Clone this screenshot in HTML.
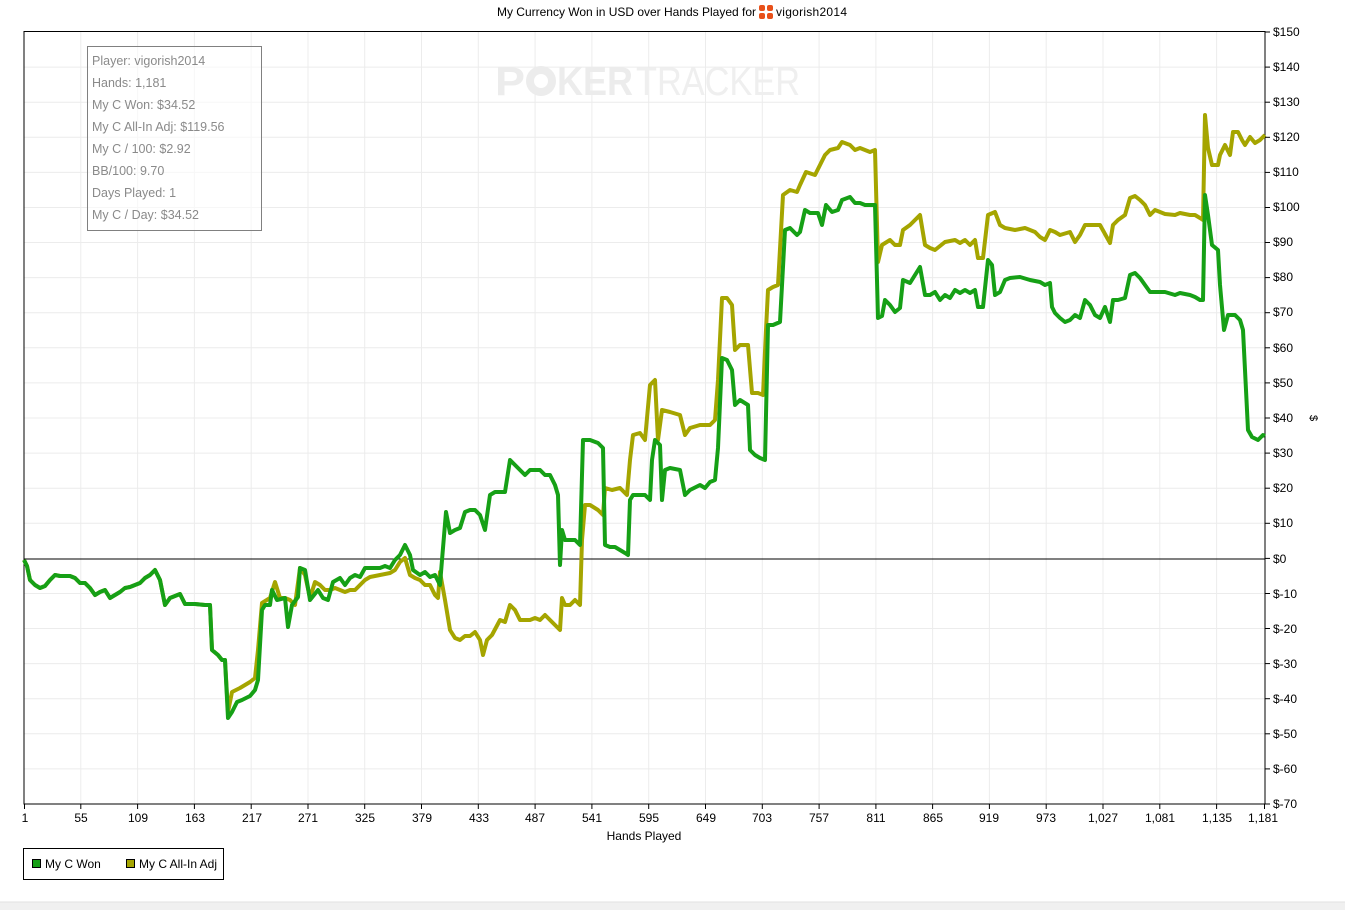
<!DOCTYPE html>
<html><head><meta charset="utf-8"><style>
html,body{margin:0;padding:0;background:#fff;width:1345px;height:910px;overflow:hidden;font-family:"Liberation Sans",sans-serif}
svg text{font-family:"Liberation Sans",sans-serif}
</style></head><body>
<svg width="1345" height="910" viewBox="0 0 1345 910" xmlns="http://www.w3.org/2000/svg">
<rect x="0" y="0" width="1345" height="910" fill="#fff"/>
<text x="497" y="16" font-size="12" fill="#000" textLength="259">My Currency Won in USD over Hands Played for</text>
<g fill="#e8501a"><rect x="759" y="5" width="6" height="6" rx="2"/><rect x="767" y="5" width="6" height="6" rx="2"/><rect x="759" y="13" width="6" height="6" rx="2"/><rect x="767" y="13" width="6" height="6" rx="2"/></g>
<text x="776" y="16" font-size="12" fill="#000" textLength="71">vigorish2014</text>
<g stroke="#ececec" stroke-width="1">
<line x1="24" x2="1265" y1="67.1" y2="67.1"/><line x1="24" x2="1265" y1="102.2" y2="102.2"/><line x1="24" x2="1265" y1="137.3" y2="137.3"/><line x1="24" x2="1265" y1="172.4" y2="172.4"/><line x1="24" x2="1265" y1="207.5" y2="207.5"/><line x1="24" x2="1265" y1="242.5" y2="242.5"/><line x1="24" x2="1265" y1="277.6" y2="277.6"/><line x1="24" x2="1265" y1="312.7" y2="312.7"/><line x1="24" x2="1265" y1="347.8" y2="347.8"/><line x1="24" x2="1265" y1="382.9" y2="382.9"/><line x1="24" x2="1265" y1="418" y2="418"/><line x1="24" x2="1265" y1="453.1" y2="453.1"/><line x1="24" x2="1265" y1="488.2" y2="488.2"/><line x1="24" x2="1265" y1="523.3" y2="523.3"/><line x1="24" x2="1265" y1="593.5" y2="593.5"/><line x1="24" x2="1265" y1="628.5" y2="628.5"/><line x1="24" x2="1265" y1="663.6" y2="663.6"/><line x1="24" x2="1265" y1="698.7" y2="698.7"/><line x1="24" x2="1265" y1="733.8" y2="733.8"/><line x1="24" x2="1265" y1="768.9" y2="768.9"/>
<line y1="32" y2="804" x1="80.8" x2="80.8"/><line y1="32" y2="804" x1="137.6" x2="137.6"/><line y1="32" y2="804" x1="194.4" x2="194.4"/><line y1="32" y2="804" x1="251.2" x2="251.2"/><line y1="32" y2="804" x1="308" x2="308"/><line y1="32" y2="804" x1="364.7" x2="364.7"/><line y1="32" y2="804" x1="421.5" x2="421.5"/><line y1="32" y2="804" x1="478.3" x2="478.3"/><line y1="32" y2="804" x1="535.1" x2="535.1"/><line y1="32" y2="804" x1="591.9" x2="591.9"/><line y1="32" y2="804" x1="648.7" x2="648.7"/><line y1="32" y2="804" x1="705.5" x2="705.5"/><line y1="32" y2="804" x1="762.3" x2="762.3"/><line y1="32" y2="804" x1="819.1" x2="819.1"/><line y1="32" y2="804" x1="875.9" x2="875.9"/><line y1="32" y2="804" x1="932.6" x2="932.6"/><line y1="32" y2="804" x1="989.4" x2="989.4"/><line y1="32" y2="804" x1="1046.2" x2="1046.2"/><line y1="32" y2="804" x1="1103" x2="1103"/><line y1="32" y2="804" x1="1159.8" x2="1159.8"/><line y1="32" y2="804" x1="1216.6" x2="1216.6"/>
</g>
<text x="495" y="95" font-size="40" font-weight="bold" fill="#ececec" textLength="30" lengthAdjust="spacingAndGlyphs">P</text>
<circle cx="541" cy="81" r="15" fill="#ececec"/><circle cx="541" cy="81" r="7" fill="#fff"/>
<text x="557" y="95" font-size="40" font-weight="bold" fill="#ececec" textLength="76" lengthAdjust="spacingAndGlyphs">KER</text>
<text x="636" y="95" font-size="40" fill="#efefef" textLength="164" lengthAdjust="spacingAndGlyphs">TRACKER</text>
<rect x="24" y="31.5" width="1241" height="772.5" fill="none" stroke="#000" stroke-width="1"/>
<line x1="24" x2="1265" y1="559" y2="559" stroke="#000" stroke-width="1"/>
<g fill="none" stroke-width="4" stroke-linejoin="round">
<polyline stroke="#a5a500" points="24,560 27,566 30,580 35,585 40,588 45,586 50,580 55,575 60,576 70,576 75,578 80,583 85,583 90,588 95,595 100,592 105,590 110,598 115,595 120,592 125,588 130,587 135,585 140,583 145,578 150,575 155,570 160,580 165,605 170,598 175,596 180,594 185,604 195,604 205,605 210,605 212,650 218,655 222,660 225,660 228,712 232,692 240,688 250,682 255,678 258,650 262,603 270,598 275,582 280,598 285,598 290,600 295,605 300,568 305,575 310,598 315,582 320,585 325,590 330,590 335,588 340,590 345,592 350,590 355,590 360,585 365,580 370,577 380,575 390,573 395,570 400,562 405,558 410,575 415,578 420,580 425,585 430,585 435,595 438,598 440,572 445,600 450,630 455,638 460,640 465,636 470,636 475,632 480,640 483,655 487,640 492,635 500,620 505,622 510,605 515,610 520,620 530,620 535,618 540,620 545,615 550,620 555,625 560,630 562,598 565,605 570,605 575,600 580,605 582,540 585,505 590,505 598,510 603,515 605,488 612,490 620,488 627,495 630,460 633,435 640,433 645,440 650,385 655,380 658,440 662,410 670,412 680,415 685,435 690,428 700,425 710,425 715,420 718,380 722,298 727,298 732,305 735,350 740,345 748,345 752,393 758,393 763,395 766,330 768,290 773,287 778,285 783,195 790,190 797,192 800,185 806,172 815,175 820,165 825,155 830,150 838,148 842,142 850,145 855,150 860,148 865,150 870,152 875,150 878,262 882,245 890,240 895,245 900,245 903,230 910,225 915,220 920,215 925,245 930,248 935,250 945,242 955,240 960,243 965,240 970,245 975,240 978,258 983,258 988,215 995,212 1000,225 1005,228 1015,230 1025,228 1035,232 1040,237 1045,240 1050,230 1055,232 1060,235 1070,232 1075,242 1080,235 1085,225 1090,225 1100,225 1110,243 1113,225 1118,220 1125,215 1130,198 1135,196 1140,200 1145,205 1150,215 1155,210 1165,214 1175,215 1180,213 1190,215 1195,215 1200,218 1203,220 1205,115 1208,148 1212,165 1218,165 1220,155 1225,145 1230,155 1233,132 1238,132 1242,140 1245,145 1250,137 1255,143 1260,140 1265,135"/>
<polyline stroke="#16a016" points="24,560 27,566 30,580 35,585 40,588 45,586 50,580 55,575 60,576 70,576 75,578 80,583 85,583 90,588 95,595 100,592 105,590 110,598 115,595 120,592 125,588 130,587 135,585 140,583 145,578 150,575 155,570 160,580 165,605 170,598 175,596 180,594 185,604 195,604 205,605 210,605 212,650 218,655 222,660 225,660 228,718 232,712 237,702 242,700 250,696 255,690 258,680 262,610 265,605 270,605 272,590 277,600 285,598 288,627 292,605 298,597 300,568 305,570 310,600 318,590 323,598 328,600 333,582 340,578 345,585 350,578 355,575 360,577 365,568 370,568 380,568 385,566 390,568 395,560 400,555 405,545 410,555 413,570 420,575 425,572 430,577 435,575 440,585 442,560 446,512 450,533 455,530 460,528 465,512 470,510 475,510 480,515 485,530 490,495 495,492 505,492 510,460 515,465 520,470 525,475 530,470 540,470 545,475 550,475 555,485 558,495 560,565 562,530 565,540 570,540 575,540 580,545 583,440 590,440 598,443 603,448 605,545 610,547 615,547 620,550 625,553 628,555 630,500 633,495 640,495 645,495 650,500 652,460 655,440 660,445 662,500 665,470 670,468 680,470 685,495 690,490 700,485 705,488 710,482 715,480 718,448 722,358 727,360 732,370 735,405 740,400 748,405 750,450 755,455 760,458 765,460 768,325 773,325 780,322 785,230 790,228 797,235 800,232 805,210 810,213 818,213 822,225 826,205 832,212 838,210 842,200 850,197 855,203 860,203 865,205 870,205 875,205 878,318 882,316 885,300 890,305 895,312 900,308 903,280 910,283 915,275 920,267 925,295 930,295 935,292 940,300 945,295 950,298 955,290 960,293 965,290 970,293 975,290 978,307 983,307 988,260 992,265 995,295 1000,292 1005,280 1010,278 1020,277 1030,280 1040,282 1045,285 1050,283 1052,307 1055,313 1060,318 1065,322 1070,320 1075,315 1080,318 1085,300 1090,305 1095,315 1100,318 1105,307 1110,322 1113,300 1118,300 1125,298 1130,275 1135,273 1140,278 1145,285 1150,292 1155,292 1165,292 1175,295 1180,293 1190,295 1195,297 1200,300 1203,300 1205,195 1208,215 1212,245 1218,250 1220,285 1224,330 1228,315 1235,315 1240,320 1243,330 1248,430 1252,437 1258,440 1263,435 1265,436"/>
</g>
<g stroke="#000" stroke-width="1">
<line x1="1265" x2="1270" y1="32" y2="32"/><line x1="1265" x2="1270" y1="67.1" y2="67.1"/><line x1="1265" x2="1270" y1="102.2" y2="102.2"/><line x1="1265" x2="1270" y1="137.3" y2="137.3"/><line x1="1265" x2="1270" y1="172.4" y2="172.4"/><line x1="1265" x2="1270" y1="207.5" y2="207.5"/><line x1="1265" x2="1270" y1="242.5" y2="242.5"/><line x1="1265" x2="1270" y1="277.6" y2="277.6"/><line x1="1265" x2="1270" y1="312.7" y2="312.7"/><line x1="1265" x2="1270" y1="347.8" y2="347.8"/><line x1="1265" x2="1270" y1="382.9" y2="382.9"/><line x1="1265" x2="1270" y1="418" y2="418"/><line x1="1265" x2="1270" y1="453.1" y2="453.1"/><line x1="1265" x2="1270" y1="488.2" y2="488.2"/><line x1="1265" x2="1270" y1="523.3" y2="523.3"/><line x1="1265" x2="1270" y1="558.4" y2="558.4"/><line x1="1265" x2="1270" y1="593.5" y2="593.5"/><line x1="1265" x2="1270" y1="628.5" y2="628.5"/><line x1="1265" x2="1270" y1="663.6" y2="663.6"/><line x1="1265" x2="1270" y1="698.7" y2="698.7"/><line x1="1265" x2="1270" y1="733.8" y2="733.8"/><line x1="1265" x2="1270" y1="768.9" y2="768.9"/><line x1="1265" x2="1270" y1="804" y2="804"/>
<line y1="804" y2="809" x1="24.5" x2="24.5"/><line y1="804" y2="809" x1="80.8" x2="80.8"/><line y1="804" y2="809" x1="137.6" x2="137.6"/><line y1="804" y2="809" x1="194.4" x2="194.4"/><line y1="804" y2="809" x1="251.2" x2="251.2"/><line y1="804" y2="809" x1="308" x2="308"/><line y1="804" y2="809" x1="364.7" x2="364.7"/><line y1="804" y2="809" x1="421.5" x2="421.5"/><line y1="804" y2="809" x1="478.3" x2="478.3"/><line y1="804" y2="809" x1="535.1" x2="535.1"/><line y1="804" y2="809" x1="591.9" x2="591.9"/><line y1="804" y2="809" x1="648.7" x2="648.7"/><line y1="804" y2="809" x1="705.5" x2="705.5"/><line y1="804" y2="809" x1="762.3" x2="762.3"/><line y1="804" y2="809" x1="819.1" x2="819.1"/><line y1="804" y2="809" x1="875.9" x2="875.9"/><line y1="804" y2="809" x1="932.6" x2="932.6"/><line y1="804" y2="809" x1="989.4" x2="989.4"/><line y1="804" y2="809" x1="1046.2" x2="1046.2"/><line y1="804" y2="809" x1="1103" x2="1103"/><line y1="804" y2="809" x1="1159.8" x2="1159.8"/><line y1="804" y2="809" x1="1216.6" x2="1216.6"/><line y1="804" y2="809" x1="1264.5" x2="1264.5"/>
</g>
<g font-size="12" fill="#000">
<text x="1273" y="36">$150</text><text x="1273" y="71">$140</text><text x="1273" y="106">$130</text><text x="1273" y="141">$120</text><text x="1273" y="176">$110</text><text x="1273" y="211">$100</text><text x="1273" y="246">$90</text><text x="1273" y="281">$80</text><text x="1273" y="316">$70</text><text x="1273" y="352">$60</text><text x="1273" y="387">$50</text><text x="1273" y="422">$40</text><text x="1273" y="457">$30</text><text x="1273" y="492">$20</text><text x="1273" y="527">$10</text><text x="1273" y="563">$0</text><text x="1273" y="598">$-10</text><text x="1273" y="633">$-20</text><text x="1273" y="668">$-30</text><text x="1273" y="703">$-40</text><text x="1273" y="738">$-50</text><text x="1273" y="773">$-60</text><text x="1273" y="808">$-70</text>
</g>
<text x="1310" y="418" font-size="11" fill="#000" transform="rotate(90 1310 418)" text-anchor="middle">$</text>
<g font-size="12" fill="#000" text-anchor="middle">
<text x="25" y="822">1</text><text x="81" y="822">55</text><text x="138" y="822">109</text><text x="195" y="822">163</text><text x="252" y="822">217</text><text x="308" y="822">271</text><text x="365" y="822">325</text><text x="422" y="822">379</text><text x="479" y="822">433</text><text x="535" y="822">487</text><text x="592" y="822">541</text><text x="649" y="822">595</text><text x="706" y="822">649</text><text x="762" y="822">703</text><text x="819" y="822">757</text><text x="876" y="822">811</text><text x="933" y="822">865</text><text x="989" y="822">919</text><text x="1046" y="822">973</text><text x="1103" y="822">1,027</text><text x="1160" y="822">1,081</text><text x="1217" y="822">1,135</text><text x="1263" y="822">1,181</text>
<text x="644" y="840">Hands Played</text>
</g>
<rect x="87.5" y="46.5" width="174" height="184" fill="#fff" fill-opacity="0.6" stroke="#808080"/>
<g font-size="12.5" fill="#8a8a8a">
<text x="92" y="65">Player: vigorish2014</text><text x="92" y="87">Hands: 1,181</text><text x="92" y="109">My C Won: $34.52</text><text x="92" y="131">My C All-In Adj: $119.56</text><text x="92" y="153">My C / 100: $2.92</text><text x="92" y="175">BB/100: 9.70</text><text x="92" y="197">Days Played: 1</text><text x="92" y="219">My C / Day: $34.52</text>
</g>
<rect x="23.5" y="848.5" width="200" height="31" fill="#fff" stroke="#000"/>
<rect x="32.5" y="859.5" width="8" height="8" fill="#16a016" stroke="#000"/>
<text x="45" y="868" font-size="12" fill="#000">My C Won</text>
<rect x="126.5" y="859.5" width="8" height="8" fill="#a5a500" stroke="#000"/>
<text x="139" y="868" font-size="12" fill="#000">My C All-In Adj</text>
<rect x="0" y="902" width="1345" height="8" fill="#f0f0f0"/>
<line x1="0" x2="1345" y1="902" y2="902" stroke="#e2e2e2"/>
</svg>
</body></html>
